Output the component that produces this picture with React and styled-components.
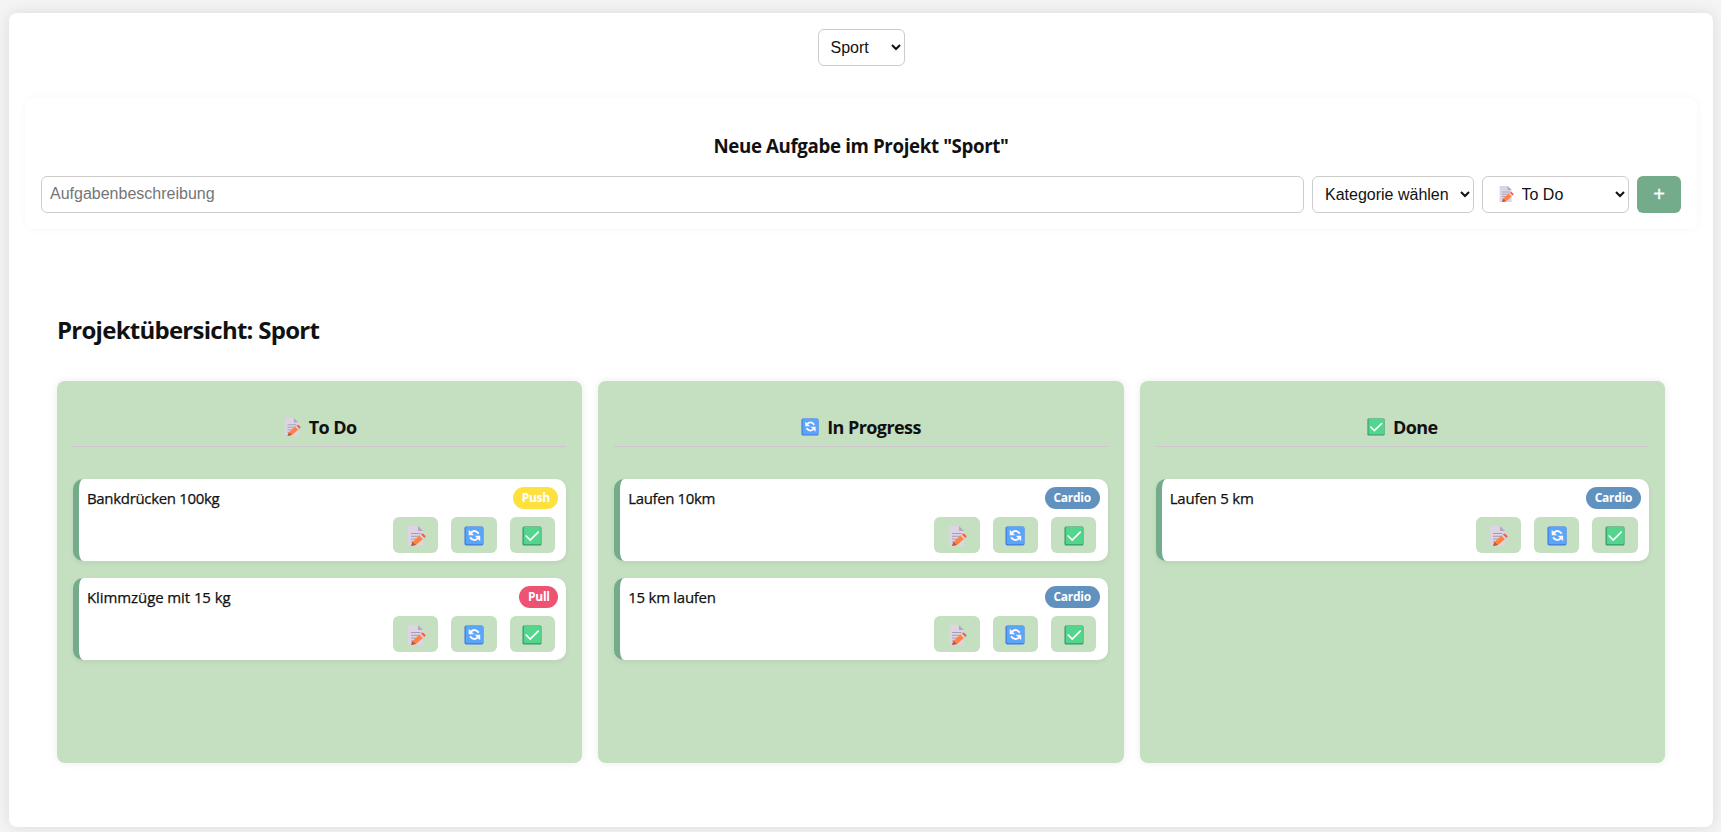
import React from "react";
import styled, { createGlobalStyle } from "styled-components";

const GlobalStyle = createGlobalStyle`
  *, *::before, *::after { box-sizing: border-box; }
  body {
    margin: 0;
    background: #f4f4f4;
    color: #111;
    font-family: "Segoe UI", "Open Sans", "Noto Sans", sans-serif;
    overflow: hidden;
  }
`;

const Shell = styled.main`
  height: 814px;
  margin: 13px 8px 5px 9px;
  padding: 16px;
  border-radius: 8px;
  background: #fff;
  box-shadow: 0 0 15px rgba(0, 0, 0, 0.1);
`;

const ProjectPicker = styled.div`
  display: flex;
  justify-content: center;
  height: 69px;
`;

const Select = styled.select`
  width: ${(p) => p.$width}px;
  height: 37px;
  padding: 8px 0 8px ${(p) => p.$inset ?? 8}px;
  border: 1px solid #ccc;
  border-radius: 6px;
  background: #fff;
  color: #111;
  font: 16px "Liberation Sans", Arial, sans-serif;
`;

const StatusField = styled.div`
  position: relative;
  display: flex;
`;

const StatusIcon = styled.span`
  position: absolute;
  left: 16px;
  top: 10px;
  display: flex;
  pointer-events: none;
`;

const TaskForm = styled.form`
  height: 131px;
  padding: 16px;
  border-radius: 8px;
  background: #fff;
  box-shadow: 0 0 8px rgba(0, 0, 0, 0.04);
`;

const FormTitle = styled.h3`
  margin: 19px 0 16.5px;
  font-size: 18.72px;
  line-height: 26px;
  text-align: center;
  letter-spacing: -0.37px;
`;

const FormRow = styled.div`
  display: flex;
  gap: 8px;
`;

const TextInput = styled.input`
  flex: 1;
  min-width: 0;
  height: 37px;
  padding: 8px;
  border: 1px solid #ccc;
  border-radius: 6px;
  font: 16px "Liberation Sans", Arial, sans-serif;
  &::placeholder { color: #757575; }
`;

const AddButton = styled.button`
  display: flex;
  align-items: center;
  justify-content: center;
  width: 44px;
  height: 37px;
  padding: 0;
  border: 0;
  border-radius: 6px;
  background: #74ab8b;
  color: #fff;
  font: 20px "Liberation Sans", Arial, sans-serif;
  -webkit-text-stroke: 0.3px #fff;
`;

const Overview = styled.section`
  padding: 84px 32px 0;
`;

const OverviewTitle = styled.h2`
  margin: 0 0 34px;
  font-size: 24px;
  line-height: 34px;
  letter-spacing: -0.74px;
`;

const Board = styled.div`
  display: grid;
  grid-template-columns: repeat(3, 1fr);
  gap: 16px;
`;

const Column = styled.section`
  height: 382px;
  padding: 16px;
  border-radius: 8px;
  background: #c5dfc1;
  box-shadow: 0 0 8px rgba(0, 0, 0, 0.08);
`;

const ColumnTitle = styled.h3`
  display: flex;
  align-items: center;
  justify-content: center;
  gap: 8px;
  height: 50px;
  margin: 0 0 32px;
  padding-top: 11px;
  border-bottom: 1px solid #cdc6cd;
  font-size: 18px;
  line-height: 26px;
  letter-spacing: -0.58px;
`;

const Card = styled.article`
  height: 82px;
  margin-bottom: 17px;
  padding: 8px;
  border-left: 6px solid #74ab8b;
  border-radius: 10px;
  background: #fff;
  box-shadow: 0 2px 5px rgba(0, 0, 0, 0.06);
`;

const CardHead = styled.div`
  display: flex;
  align-items: flex-start;
  justify-content: space-between;
  height: 22px;
`;

const TaskName = styled.span`
  font-size: 15px;
  font-weight: 500;
  line-height: 22px;
  letter-spacing: ${(p) => p.$track}px;
  -webkit-text-stroke: 0.25px #111;
`;

const Tag = styled.span`
  width: ${(p) => p.$width}px;
  height: 22px;
  border-radius: 12px;
  background: ${(p) => p.$color};
  color: #fff;
  font-size: 12px;
  font-weight: 700;
  line-height: 22px;
  text-align: center;
  letter-spacing: -0.25px;
`;

const Actions = styled.div`
  display: flex;
  justify-content: flex-end;
  gap: 13px;
  margin-top: 8px;
  padding-right: 3.4px;
`;

const ActionButton = styled.button`
  display: flex;
  align-items: center;
  justify-content: center;
  width: 45.3px;
  height: 36px;
  padding: 2px 0 0;
  border: 0;
  border-radius: 6px;
  background: #c5dfc1;
`;

function MemoIcon({ size }) {
  return (
    <svg width={size} height={size} viewBox="0 0 20 20">
      <path d="M2 0h10l5 5v15H2z" fill="#dcd4e3" />
      <path d="M12 0l5 5h-5z" fill="#b3a9bd" />
      <path d="M5 7.500h9.500M5 10.300h9M5 13.100h6M5 15.900h3" stroke="#a79daf" strokeWidth="1" />
      <path d="M6.500 16l7.500-7 3.500 3.500-7.500 6.500-5 1z" fill="#ff823f" />
      <path d="M6.500 16l3.500 3-5 1z" fill="#b8573f" />
      <path d="M13.500 9.700l1.400-1.200 3.400 3.300-1.400 1.200z" fill="#ddd3e5" />
      <path d="M14.900 8.500l1-.8q.8-.5 1.500.2l1.900 1.900q.6.800-.1 1.400l-.9.700z" fill="#fa5b50" />
    </svg>
  );
}

function RefreshIcon({ size }) {
  return (
    <svg width={size} height={size} viewBox="0 0 20 20">
      <rect x=".5" y=".5" width="19" height="19" rx="1.800" fill="#4279d9" />
      <rect x="1.700" y=".7" width="17.500" height="17.500" rx="1.500" fill="#58a5fa" />
      <path d="M6.500 7Q10.800 2.600 14.800 7.700M14.500 11.900Q10.300 16.300 6 11.300" fill="none" stroke="#fff5ff" strokeWidth="2" />
      <path d="M4.700 3.800v5.500h5.500zM16.200 15.300V9.800h-5.500z" fill="#fff5ff" />
    </svg>
  );
}

function CheckIcon({ size }) {
  return (
    <svg width={size} height={size} viewBox="0 0 20 20">
      <rect x=".5" y=".5" width="19" height="19" rx="1.500" fill="#359968" />
      <rect x="1.700" y=".9" width="17.200" height="17.300" rx="1.200" fill="#54d58d" />
      <path d="M4.200 10l4 4 8-7.800" fill="none" stroke="#fff" strokeWidth="1.700" strokeLinecap="round" />
    </svg>
  );
}

const statuses = [
  { id: "todo", label: "To Do", Icon: MemoIcon },
  { id: "progress", label: "In Progress", Icon: RefreshIcon },
  { id: "done", label: "Done", Icon: CheckIcon },
];

const categories = {
  Push: { color: "#fde13f", width: 45 },
  Pull: { color: "#ed5373", width: 39 },
  Cardio: { color: "#6191be", width: 55 },
};

const tasks = [
  { name: "Bankdrücken 100kg", category: "Push", status: "todo", track: -0.33 },
  { name: "Klimmzüge mit 15 kg", category: "Pull", status: "todo", track: -0.09 },
  { name: "Laufen 10km", category: "Cardio", status: "progress", track: -0.38 },
  { name: "15 km laufen", category: "Cardio", status: "progress", track: -0.28 },
  { name: "Laufen 5 km", category: "Cardio", status: "done", track: -0.2 },
];

function TaskCard({ task }) {
  const category = categories[task.category];
  return (
    <Card>
      <CardHead>
        <TaskName $track={task.track}>{task.name}</TaskName>
        <Tag $color={category.color} $width={category.width}>{task.category}</Tag>
      </CardHead>
      <Actions>
        {statuses.map(({ id, label, Icon }) => (
          <ActionButton key={id} aria-label={label}>
            <Icon size={20} />
          </ActionButton>
        ))}
      </Actions>
    </Card>
  );
}

export default function App() {
  return (
    <>
      <GlobalStyle />
      <Shell>
        <ProjectPicker>
          <Select $width={87} defaultValue="Sport">
            <option>Sport</option>
          </Select>
        </ProjectPicker>
        <TaskForm onSubmit={(e) => e.preventDefault()}>
          <FormTitle>Neue Aufgabe im Projekt "Sport"</FormTitle>
          <FormRow>
            <TextInput placeholder="Aufgabenbeschreibung" />
            <Select $width={162}>
              <option>Kategorie wählen</option>
            </Select>
            <StatusField>
              <Select $width={147} $inset={34.5}>
                <option>To Do</option>
              </Select>
              <StatusIcon><MemoIcon size={16} /></StatusIcon>
            </StatusField>
            <AddButton>+</AddButton>
          </FormRow>
        </TaskForm>
        <Overview>
          <OverviewTitle>Projektübersicht: Sport</OverviewTitle>
          <Board>
            {statuses.map(({ id, label, Icon }) => (
              <Column key={id}>
                <ColumnTitle><Icon size={18} />{label}</ColumnTitle>
                {tasks.filter((t) => t.status === id).map((t) => (
                  <TaskCard key={t.name} task={t} />
                ))}
              </Column>
            ))}
          </Board>
        </Overview>
      </Shell>
    </>
  );
}
